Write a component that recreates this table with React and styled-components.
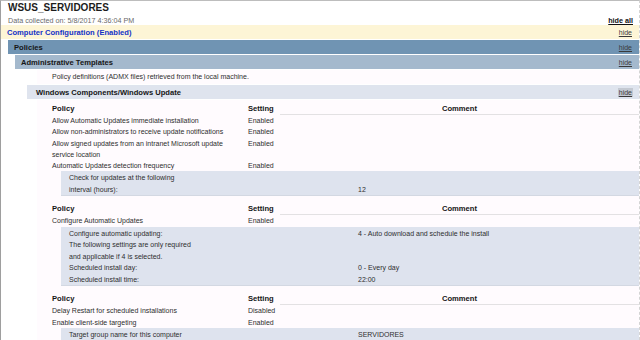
import React from 'react';
import styled, { createGlobalStyle } from 'styled-components';

const GlobalStyle = createGlobalStyle`
  html, body { margin: 0; padding: 0; background: #fff; }
  body { font-family: "Liberation Sans", Arial, sans-serif; color: #2e2e2e; }
`;

const Page = styled.div`
  width: 640px;
  height: 340px;
  box-sizing: border-box;
  overflow: hidden;
  background: #fff;
  border-top: 1px solid #bdbdbd;
  border-left: 1px solid #9e9e9e;
  border-right: 1px dashed #d4d4d4;
`;

const Header = styled.header`
  padding: 1px 6px 0 7px;
`;

const Title = styled.h1`
  margin: 0;
  font-size: 10px;
  line-height: 12px;
  font-weight: bold;
  color: #1c1c1c;
`;

const MetaRow = styled.div`
  display: flex;
  justify-content: space-between;
  align-items: baseline;
  margin-top: 2px;
  height: 9px;
  line-height: 9px;
`;

const Collected = styled.span`
  font-size: 7.2px;
  color: #6a6a6a;
`;

const HideAll = styled.a`
  font-size: 7.2px;
  font-weight: bold;
  color: #111;
  text-decoration: underline;
`;

const Bar = styled.div`
  display: flex;
  align-items: center;
  justify-content: space-between;
  height: 14px;
  margin: 0 0 1px ${p => p.$indent}px;
  padding: 0 6px 0 ${p => p.$pad}px;
  background: ${p => p.$bg};
`;

const BarTitle = styled.span`
  font-size: 7.6px;
  font-weight: bold;
  color: ${p => p.$color || '#161616'};
`;

const HideLink = styled.a`
  font-size: 7px;
  line-height: 9px;
  padding: 0 1px;
  color: #3a3a3a;
  text-decoration: underline;
  background: ${p => (p.$active ? '#c4c9d2' : 'transparent')};
`;

const Panel = styled.div`
  margin-left: 36px;
  padding-left: 15px;
  background: #fffbfe;
`;

const Note = styled(Panel)`
  height: 14px;
  line-height: 14px;
  font-size: 7px;
  margin-bottom: 1px;
`;

const PolicyTable = styled.div`
  display: grid;
  grid-template-columns: 196px 32px 1fr;
  padding-top: ${p => (p.$first ? 0 : 4)}px;
`;

const HeadCell = styled.div`
  font-size: 7.6px;
  font-weight: bold;
  color: #151515;
  padding-top: 3px;
  line-height: 11px;
  text-align: ${p => (p.$center ? 'center' : 'left')};
  border-bottom: 1px solid ${p => (p.$ruled ? '#e3e1e3' : 'transparent')};
`;

const Cell = styled.div`
  font-size: 7px;
  line-height: 11.3px;
  color: #2e2e2e;
`;

const Details = styled.div`
  grid-column: 1 / -1;
  margin-left: 9px;
  padding: 1px 0 0 8px;
  display: grid;
  grid-template-columns: 289px 1fr;
  background: #dee3ee;
  border-bottom: 1px solid #d3d8e2;
`;

const DetailCell = styled.div`
  font-size: 7px;
  line-height: 11.5px;
  color: #2e2e2e;
`;

const tables = [
  {
    rows: [
      { policy: ['Allow Automatic Updates immediate installation'], setting: 'Enabled' },
      { policy: ['Allow non-administrators to receive update notifications'], setting: 'Enabled' },
      { policy: ['Allow signed updates from an intranet Microsoft update', 'service location'], setting: 'Enabled' },
      {
        policy: ['Automatic Updates detection frequency'],
        setting: 'Enabled',
        details: [
          ['Check for updates at the following', ''],
          ['interval (hours):', '12'],
        ],
      },
    ],
  },
  {
    rows: [
      {
        policy: ['Configure Automatic Updates'],
        setting: 'Enabled',
        details: [
          ['Configure automatic updating:', '4 - Auto download and schedule the install'],
          ['The following settings are only required', ''],
          ['and applicable if 4 is selected.', ''],
          ['Scheduled install day:', '0 - Every day'],
          ['Scheduled install time:', '22:00'],
        ],
      },
    ],
  },
  {
    rows: [
      { policy: ['Delay Restart for scheduled installations'], setting: 'Disabled' },
      {
        policy: ['Enable client-side targeting'],
        setting: 'Enabled',
        details: [['Target group name for this computer', 'SERVIDORES']],
      },
    ],
  },
];

function Lines({ items }) {
  return items.map((t, i) => (
    <React.Fragment key={i}>
      {i > 0 && <br />}
      {t}
    </React.Fragment>
  ));
}

export default function App() {
  return (
    <>
      <GlobalStyle />
      <Page>
        <Header>
          <Title>WSUS_SERVIDORES</Title>
          <MetaRow>
            <Collected>Data collected on: 5/8/2017 4:36:04 PM</Collected>
            <HideAll>hide all</HideAll>
          </MetaRow>
        </Header>

        <Bar $bg="#fdf5d6" $indent={0} $pad={6}>
          <BarTitle $color="#1431c6">Computer Configuration (Enabled)</BarTitle>
          <HideLink>hide</HideLink>
        </Bar>
        <Bar $bg="#7094b3" $indent={7} $pad={6}>
          <BarTitle>Policies</BarTitle>
          <HideLink>hide</HideLink>
        </Bar>
        <Bar $bg="#a4b9cd" $indent={14} $pad={6}>
          <BarTitle>Administrative Templates</BarTitle>
          <HideLink>hide</HideLink>
        </Bar>
        <Note>Policy definitions (ADMX files) retrieved from the local machine.</Note>
        <Bar $bg="#dfe4ee" $indent={26} $pad={9}>
          <BarTitle>Windows Components/Windows Update</BarTitle>
          <HideLink $active>hide</HideLink>
        </Bar>

        <Panel>
          {tables.map((table, ti) => (
            <PolicyTable key={ti} $first={ti === 0}>
              <HeadCell>Policy</HeadCell>
              <HeadCell>Setting</HeadCell>
              <HeadCell $center $ruled>Comment</HeadCell>
              {table.rows.map((row, ri) => (
                <React.Fragment key={ri}>
                  <Cell><Lines items={row.policy} /></Cell>
                  <Cell>{row.setting}</Cell>
                  <Cell />
                  {row.details && (
                    <Details>
                      {row.details.map(([label, value], di) => (
                        <React.Fragment key={di}>
                          <DetailCell>{label}</DetailCell>
                          <DetailCell>{value}</DetailCell>
                        </React.Fragment>
                      ))}
                    </Details>
                  )}
                </React.Fragment>
              ))}
            </PolicyTable>
          ))}
        </Panel>
      </Page>
    </>
  );
}
